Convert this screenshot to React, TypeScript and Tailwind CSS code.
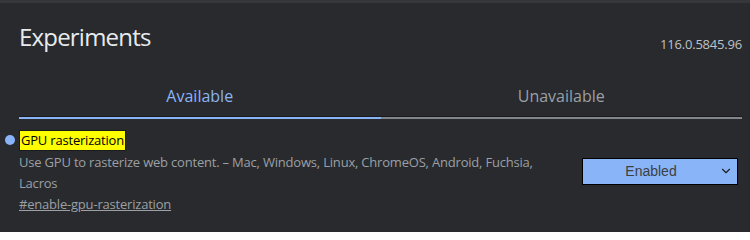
import { ChevronDown } from "lucide-react";

const font = { fontFamily: '"Segoe UI", "Open Sans", "Noto Sans", sans-serif' };

export default function App() {
  return (
    <div className="w-[750px] h-[232px] overflow-hidden bg-[#292a2d] text-[#e8eaed]" style={font}>
      <div className="h-[3px] bg-[#36373a]" />

      <div className="pl-[19px] pr-[8px]">
        {/* header */}
        <div className="flex items-end justify-between pt-[18px]">
          <h1 className="text-[24px] leading-[32px] font-normal tracking-[-0.8px] text-[#e8eaed]">Experiments</h1>
          <span className="text-[13px] leading-[18px] tracking-[-0.2px] text-[#bdc1c6]">116.0.5845.96</span>
        </div>

        {/* tabs */}
        <div className="flex mt-[32px]">
          <div className="flex-1 flex flex-col">
            <span className="text-center text-[16px] leading-[22px] text-[#8ab4f8] pb-[9px]">Available</span>
            <div className="h-px bg-[#1a1b1d]" />
            <div className="h-[2px] bg-[#8ab4f8]" />
          </div>
          <div className="flex-1 flex flex-col">
            <span className="text-center text-[16px] leading-[22px] text-[#9aa0a6] pb-[9px]">Unavailable</span>
            <div className="h-px bg-[#1a1b1d]" />
            <div className="h-[2px] bg-[#80868b]" />
          </div>
        </div>

        {/* experiment */}
        <div className="relative flex items-center justify-between mt-[8px]">
          <div className="flex flex-col">
            <div className="relative">
              <span className="absolute -left-[14px] top-[8px] w-[10px] h-[10px] rounded-full bg-[#8ab4f8]" />
              <span className="inline-block bg-[#ffff00] text-black text-[13px] leading-[19px] tracking-[-0.2px] px-px border border-[#1a1b1d]">
                GPU rasterization
              </span>
            </div>
            <p className="text-[13px] leading-[21px] tracking-[-0.2px] text-[#9aa0a6] w-[540px] mt-[1px]">
              Use GPU to rasterize web content. – Mac, Windows, Linux, ChromeOS, Android, Fuchsia, Lacros
            </p>
            <a className="text-[13px] leading-[21px] tracking-[-0.2px] text-[#9aa0a6] underline self-start">#enable-gpu-rasterization</a>
          </div>
          <div className="w-[156px] h-[27px] mr-[4px] bg-[#8ab4f8] border border-black flex items-center text-[#3c4043] text-[14px]" style={{ fontFamily: '"Liberation Sans", Arial, sans-serif' }}>
            <span className="flex-1 text-center">Enabled</span>
            <ChevronDown className="w-[14px] h-[14px] mr-[4px] text-[#202124]" strokeWidth={2} />
          </div>
        </div>
      </div>
    </div>
  );
}
